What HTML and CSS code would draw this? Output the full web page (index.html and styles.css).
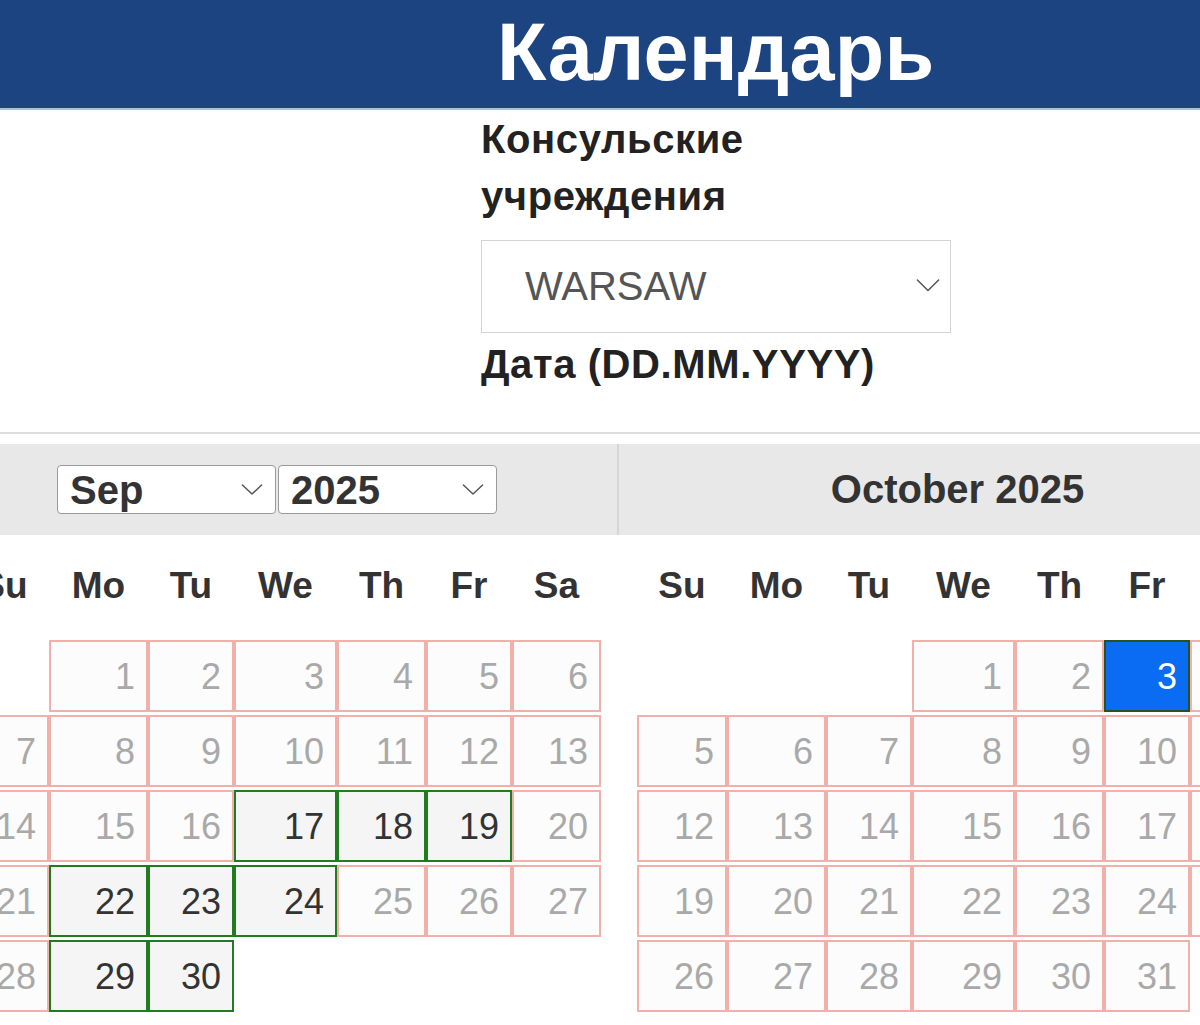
FILE: index.html
```html
<!DOCTYPE html>
<html lang="ru">
<head>
<meta charset="utf-8">
<title>Календарь</title>
<link rel="stylesheet" href="styles.css">
</head>
<body>
<header class="topbar">
  <h1 class="title">Календарь</h1>
</header>

<main class="form">
  <div class="label">Консульские учреждения</div>
  <div class="select select-big">
    <span class="select-value">WARSAW</span>
    <svg class="chev chev-big" viewBox="0 0 26 16"><polyline points="1.5,2 13,13.5 24.5,2"/></svg>
  </div>
  <div class="label label-date">Дата (DD.MM.YYYY)</div>
</main>

<div class="rule"></div>

<section class="datepicker">
  <div class="panel panel-first">
    <div class="dp-header">
      <div class="select select-small">
        <span class="select-value">Sep</span>
        <svg class="chev" viewBox="0 0 24 14"><polyline points="1.5,2 12,12 22.5,2"/></svg>
      </div>
      <div class="select select-small">
        <span class="select-value">2025</span>
        <svg class="chev" viewBox="0 0 24 14"><polyline points="1.5,2 12,12 22.5,2"/></svg>
      </div>
    </div>
    <div class="grid">
      <div class="dn">Su</div><div class="dn">Mo</div><div class="dn">Tu</div><div class="dn">We</div><div class="dn">Th</div><div class="dn">Fr</div><div class="dn">Sa</div>

      <div class="empty"></div>
      <div class="day">1</div><div class="day">2</div><div class="day">3</div><div class="day">4</div><div class="day">5</div><div class="day">6</div>

      <div class="day">7</div><div class="day">8</div><div class="day">9</div><div class="day">10</div><div class="day">11</div><div class="day">12</div><div class="day">13</div>

      <div class="day">14</div><div class="day">15</div><div class="day">16</div><div class="day avail">17</div><div class="day avail">18</div><div class="day avail">19</div><div class="day">20</div>

      <div class="day">21</div><div class="day avail">22</div><div class="day avail">23</div><div class="day avail">24</div><div class="day">25</div><div class="day">26</div><div class="day">27</div>

      <div class="day">28</div><div class="day avail">29</div><div class="day avail">30</div><div class="empty"></div><div class="empty"></div><div class="empty"></div><div class="empty"></div>
    </div>
  </div>

  <div class="panel panel-last">
    <div class="dp-header">
      <div class="dp-title">October 2025</div>
    </div>
    <div class="grid">
      <div class="dn">Su</div><div class="dn">Mo</div><div class="dn">Tu</div><div class="dn">We</div><div class="dn">Th</div><div class="dn">Fr</div><div class="dn">Sa</div>

      <div class="empty"></div><div class="empty"></div><div class="empty"></div>
      <div class="day">1</div><div class="day">2</div><div class="day active">3</div><div class="day">4</div>

      <div class="day">5</div><div class="day">6</div><div class="day">7</div><div class="day">8</div><div class="day">9</div><div class="day">10</div><div class="day">11</div>

      <div class="day">12</div><div class="day">13</div><div class="day">14</div><div class="day">15</div><div class="day">16</div><div class="day">17</div><div class="day">18</div>

      <div class="day">19</div><div class="day">20</div><div class="day">21</div><div class="day">22</div><div class="day">23</div><div class="day">24</div><div class="day">25</div>

      <div class="day">26</div><div class="day">27</div><div class="day">28</div><div class="day">29</div><div class="day">30</div><div class="day">31</div><div class="empty"></div>
    </div>
  </div>
</section>
</body>
</html>
```

FILE: styles.css
```css
* { box-sizing: border-box; }

html, body {
  margin: 0;
  padding: 0;
  width: 1200px;
  height: 1025px;
  overflow: hidden;
  background: #ffffff;
  font-family: "Liberation Sans", Arial, sans-serif;
}

.topbar {
  height: 110px;
  background: #1c4480;
  border-bottom: 2px solid #a9c1de;
  padding-left: 497px;
}

.title {
  margin: 0;
  color: #ffffff;
  font-size: 81px;
  font-weight: 700;
  line-height: 104px;
  letter-spacing: 0.2px;
}

.form {
  margin-left: 481px;
  width: 470px;
  padding-top: 1px;
}

.label {
  font-size: 40px;
  font-weight: 700;
  line-height: 57px;
  letter-spacing: 0.6px;
  color: #222222;
}

.label-date {
  margin-top: 3px;
}

.select {
  display: flex;
  align-items: center;
  justify-content: space-between;
  background: #ffffff;
}

.select-big {
  margin-top: 15px;
  height: 93px;
  border: 1px solid #d3d3d3;
  padding: 0 10px 0 43px;
}

.select-big .select-value {
  font-size: 40px;
  color: #555555;
}

.chev {
  width: 22px;
  height: 13px;
  fill: none;
  stroke: #555555;
  stroke-width: 1.6;
  stroke-linecap: round;
  stroke-linejoin: round;
}

.chev-big {
  width: 24px;
  height: 15px;
  margin-top: -3px;
}

.rule {
  margin-top: 39px;
  height: 2px;
  background: #dddddd;
}

.datepicker {
  margin-top: 10px;
  display: flex;
  margin-left: -58px;
}

.panel {
  flex: 0 0 auto;
  width: 677px;
  padding-bottom: 10px;
}

.dp-header {
  height: 91px;
  background: #e8e8e8;
  display: flex;
  align-items: center;
  justify-content: center;
  gap: 2px;
}

.panel-first .dp-header {
  border-right: 2px solid #d6d6d6;
  padding-right: 5px;
}

.select-small {
  width: 219px;
  height: 49px;
  border: 1px solid #9a9a9a;
  border-radius: 4px;
  padding: 0 12px 0 12px;
}

.select-small .select-value {
  font-size: 40px;
  font-weight: 700;
  color: #333333;
  line-height: 1;
}

.dp-title {
  font-size: 40px;
  font-weight: 700;
  color: #333333;
}

.grid {
  display: grid;
  grid-template-columns: 90px 99px 86px 103px 89px 86px 89px;
  grid-template-rows: 102px repeat(5, 72px);
  column-gap: 0;
  row-gap: 3px;
  padding: 0 17px;
}

.panel-last .grid {
  padding-left: 18px;
}

.dn {
  font-size: 37px;
  font-weight: 700;
  color: #333333;
  text-align: center;
  line-height: 102px;
}

.day {
  border: 2px solid #f2b0ab;
  background: #fcfcfc;
  color: #a9a9a9;
  font-size: 36px;
  text-align: right;
  padding-right: 11px;
  line-height: 70px;
}

.day.avail {
  border-color: #1f7d1f;
  background: #f5f5f5;
  color: #333333;
}

.day.active {
  border-color: #28531e;
  background: #0a6cf2;
  color: #ffffff;
}
```
